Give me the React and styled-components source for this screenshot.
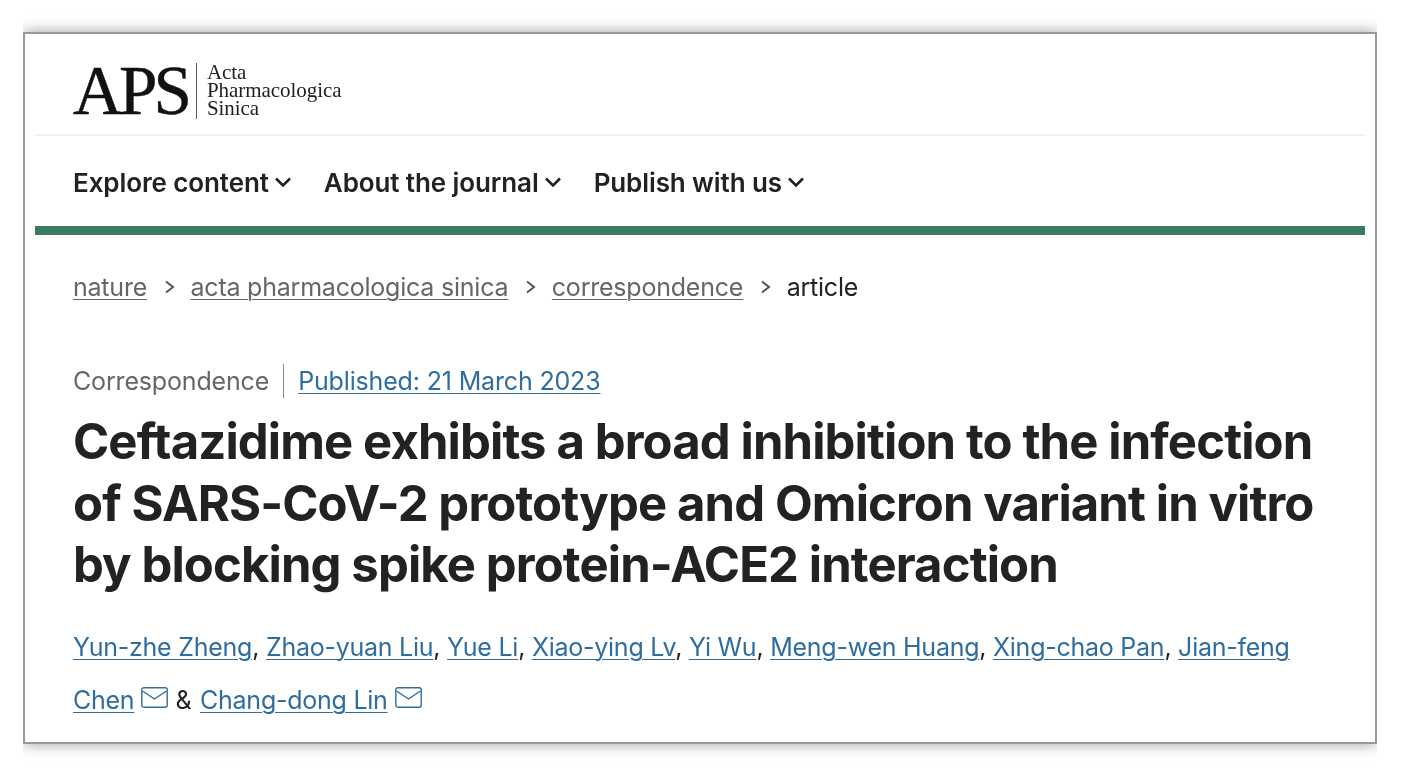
import React from "react";
import styled, { createGlobalStyle } from "styled-components";

const Global = createGlobalStyle`
  html, body { margin: 0; padding: 0; background: #fff; }
  body { font-family: Inter, "Liberation Sans", sans-serif; color: #222; }
`;
const Page = styled.div`
  width: 1426px; height: 774px; box-sizing: border-box; padding: 32px 49px 0 23px; overflow: hidden;
`;
const Frame = styled.main`
  box-sizing: border-box; height: 712px; padding: 0 10px; background: #fff;
  border: 2px solid #999;
  box-shadow: 0 0 14px rgba(0,0,0,.38);
  clip-path: inset(-24px 0);
  filter: blur(.35px);
`;
const Header = styled.header`
  height: 102px; box-sizing: border-box; border-bottom: 2px solid #f2f2f2;
  padding: 29px 0 0 38px; display: flex; align-items: flex-start;
`;
const LogoMark = styled.div`
  font-family: "Liberation Serif", serif; font-size: 69px; line-height: 56px; height: 56px;
  letter-spacing: -3.9px; color: #111; padding-right: 8px; border-right: 1px solid #555; margin-right: 10px;
  -webkit-text-stroke: .5px #111;
`;
const LogoText = styled.div`
  font-family: "Liberation Serif", serif; font-size: 21px; line-height: 18px; color: #222; letter-spacing: -.05px; padding-top: 0;
`;
const Nav = styled.nav`
  height: 90px; box-sizing: border-box; padding: 2px 0 0 38px; display: flex; align-items: center; gap: 32px;
`;
const NavItem = styled.div`
  display: flex; align-items: center; gap: 5px; font-size: 26px; font-weight: 600; letter-spacing: -.1px; color: #222;
`;
const Rule = styled.div`height: 9px; background: #3a7d5e;`;
const Crumbs = styled.div`
  display: flex; align-items: center; padding: 35px 0 0 38px; font-size: 25px; line-height: 34px; letter-spacing: -.22px;
`;
const Crumb = styled.span`color: #666; text-decoration: underline; text-decoration-thickness: 1px; text-underline-offset: 3px;`;
const Here = styled.span`color: #222;`;
const Sep = styled.svg`width: 11px; height: 14px; margin: 0 16px 0 16.5px; fill: none; stroke: #555; stroke-width: 2;`;
const Meta = styled.div`
  display: flex; align-items: center; padding: 60px 0 0 38px; font-size: 25px; line-height: 34px; letter-spacing: -.16px;
`;
const Kind = styled.span`color: #666; padding-right: 14px; border-right: 1px solid #888; margin-right: 14px;`;
const Link = styled.a`color: #2f6d9e; text-decoration: underline; text-decoration-thickness: 1px; text-underline-offset: 3px;`;
const Title = styled.h1`
  margin: 13px 0 0 38px; font-size: 49px; line-height: 61.5px; font-weight: 700; color: #222; letter-spacing: -.88px; white-space: nowrap;
`;
const Authors = styled.div`
  margin: 25px 0 0 38px; font-size: 25px; line-height: 53px; letter-spacing: -.25px; color: #222; white-space: nowrap;
`;
const Ampersand = styled.span`margin-right: 2px;`;
const Mail = styled.svg`
  width: 27px; height: 21px; margin: 0 7px 0 7px; vertical-align: 1px; fill: none; stroke: #2f6d9e; stroke-width: 1.4;
`;
const Chevron = () => (
  <svg width="18" height="12" viewBox="0 0 18 12" fill="none" stroke="#222" strokeWidth="2.6"><path d="M2 2.5l7 7 7-7" /></svg>
);
const Arrow = () => <Sep viewBox="0 0 11 14"><path d="M2 1.5l7 5.5-7 5.5" /></Sep>;
const Envelope = () => (
  <Mail viewBox="0 0 27 21"><rect x=".8" y=".8" width="25.4" height="19.4" rx="2" /><path d="M1.5 4l12 8 12-8" /></Mail>
);

export default function App() {
  return (
    <Page>
      <Global />
      <Frame>
        <Header>
          <LogoMark>APS</LogoMark>
          <LogoText>Acta<br />Pharmacologica<br />Sinica</LogoText>
        </Header>
        <Nav>
          <NavItem>Explore content<Chevron /></NavItem>
          <NavItem>About the journal<Chevron /></NavItem>
          <NavItem>Publish with us<Chevron /></NavItem>
        </Nav>
        <Rule />
        <Crumbs>
          <Crumb>nature</Crumb><Arrow />
          <Crumb>acta pharmacologica sinica</Crumb><Arrow />
          <Crumb>correspondence</Crumb><Arrow />
          <Here>article</Here>
        </Crumbs>
        <Meta>
          <Kind>Correspondence</Kind>
          <Link>Published: 21 March 2023</Link>
        </Meta>
        <Title>
          Ceftazidime exhibits a broad inhibition to the infection<br />
          of SARS-CoV-2 prototype and Omicron variant in vitro<br />
          by blocking spike protein-ACE2 interaction
        </Title>
        <Authors>
          <Link>Yun-zhe Zheng</Link>, <Link>Zhao-yuan Liu</Link>, <Link>Yue Li</Link>, <Link>Xiao-ying Lv</Link>, <Link>Yi Wu</Link>, <Link>Meng-wen Huang</Link>, <Link>Xing-chao Pan</Link>, <Link>Jian-feng</Link>
          <br />
          <Link>Chen</Link><Envelope /><Ampersand>&amp;</Ampersand> <Link>Chang-dong Lin</Link><Envelope />
        </Authors>
      </Frame>
    </Page>
  );
}
